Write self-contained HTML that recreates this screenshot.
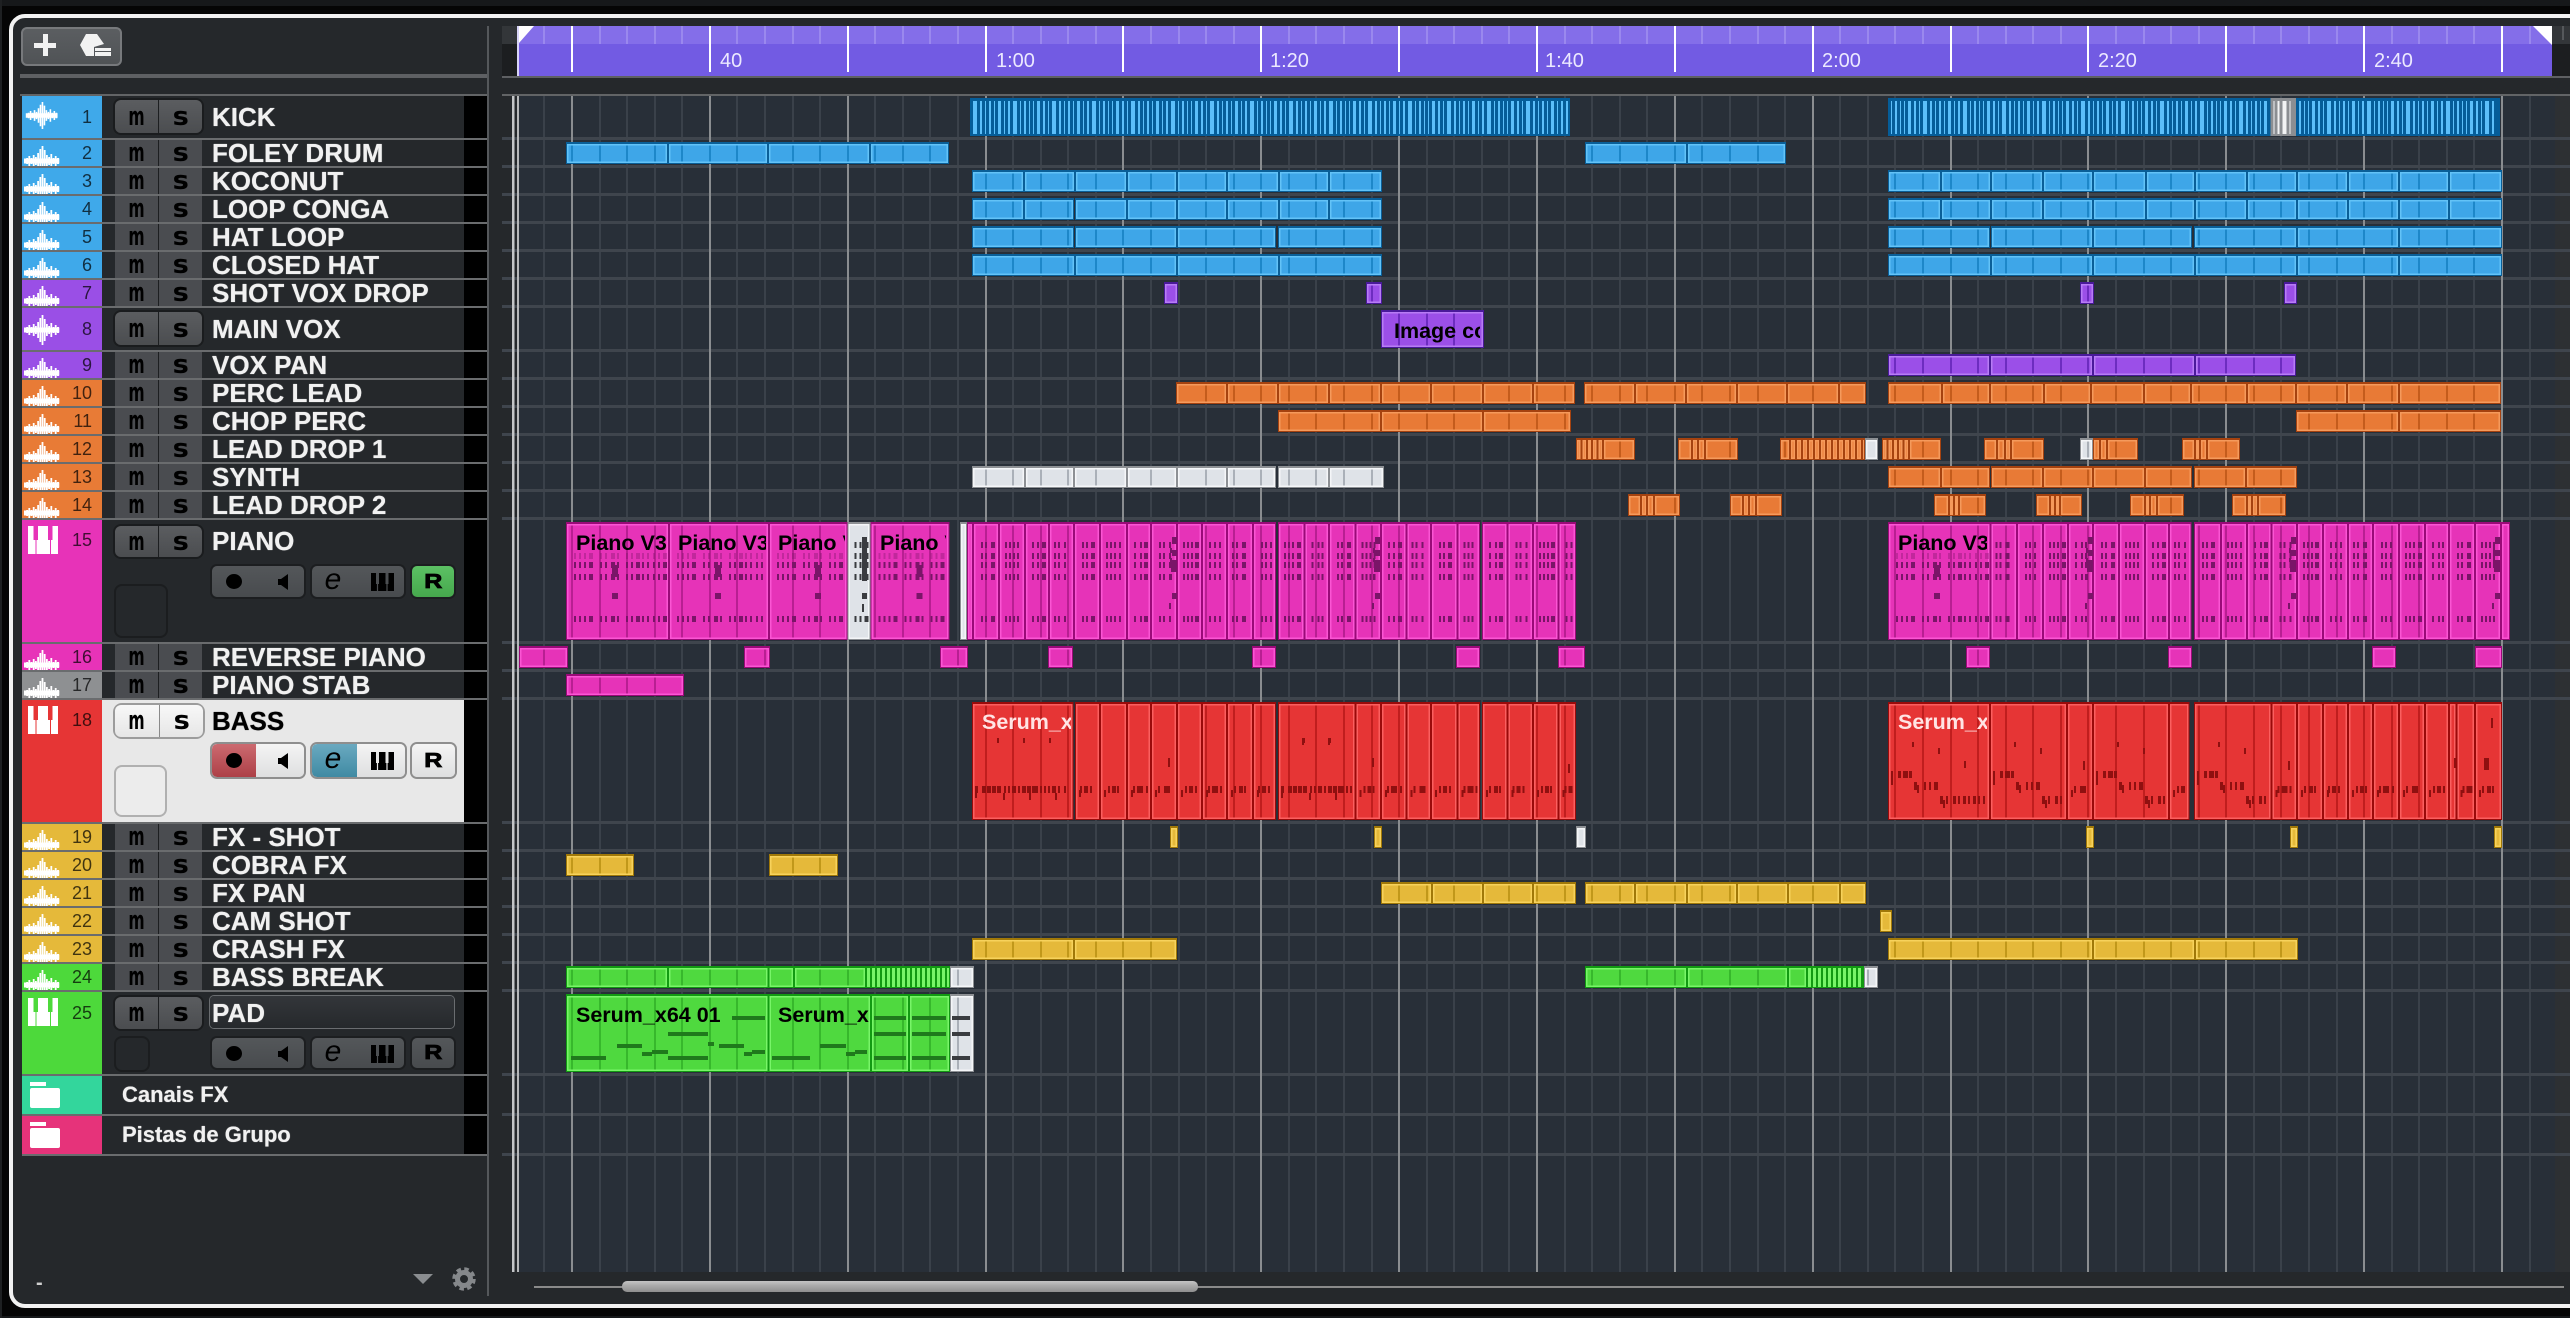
<!DOCTYPE html>
<html><head><meta charset="utf-8"><title>Arrange</title>
<style>
html,body{margin:0;padding:0;width:2570px;height:1318px;overflow:hidden;background:#050505;font-family:"Liberation Sans",sans-serif}
.a{position:absolute}
#win{position:absolute;left:9px;top:14px;width:2600px;height:1294px;box-sizing:border-box;border:4px solid #f2f2f2;border-radius:16px;background:#25282b}
#art{position:absolute;left:0;top:0}
.tl{position:absolute;height:30px;line-height:30px;font-size:20px;color:#ece9ff;top:46px}
.lb{position:absolute;height:30px;line-height:30px;font-size:21.5px;font-weight:700;color:#000;overflow:hidden;white-space:nowrap}
.r{position:absolute;left:22px;width:465px;background:#25282b;--g:#4c4f52}
.r:after{content:"";position:absolute;left:0;right:0;bottom:-2px;height:2px;background:#6a6c6e}
.st{position:absolute;left:0;top:0;width:80px;height:100%;background:var(--c);overflow:hidden}
.st svg{position:absolute;left:2px;top:6px;width:36px;height:30px;fill:#fff}
.n{position:absolute;left:0;width:70px;text-align:right;font-size:18px;color:rgba(0,0,0,.72);font-weight:400;height:24px;line-height:24px;top:calc(50% - 12px)}
.k{position:absolute;left:442px;width:23px;top:0;height:100%;background:#000}
.nm{position:absolute;left:190px;top:0;height:100%;display:flex;align-items:center;font-size:26px;font-weight:700;color:#f1f1f1;white-space:nowrap;text-shadow:0 0 .7px currentColor}
.ms{position:absolute;left:93px;width:87px;top:0;height:100%;display:flex;gap:1px;background:#1d1f21}
.ms p{margin:0;flex:1;display:flex;align-items:center;justify-content:center;background:#4a4c50}
.ms em{display:block;font:700 26px/1 "DejaVu Sans",sans-serif;color:#000;font-style:normal;transform:scaleX(.6)}
.ms p+p em{transform:scaleX(1.05)}
.ms.b{top:4px;height:33px;border-radius:6px;overflow:visible;box-shadow:0 0 0 2px #1a1c1e}
.ms.b p{background:linear-gradient(#5b5d60,#4b4d50)}
.ms.b p:first-child{border-radius:6px 0 0 6px}.ms.b p:last-child{border-radius:0 6px 6px 0}
.cg{position:absolute;height:31px;border-radius:5px;background:linear-gradient(#54575a,#484b4e);box-shadow:0 0 0 2px #1c1e20}
.dot{position:absolute;left:14px;top:8px;width:16px;height:15px;border-radius:50%;background:#000}
.spk{position:absolute;left:66px;top:8px;width:10px;height:16px;fill:#000}
.eg{position:absolute;left:11px;top:-4px;width:20px;height:36px;text-align:center;font:italic 400 30px/36px "Liberation Sans",sans-serif;color:#000}
.kb{position:absolute;left:59px;top:7px;width:23px;height:18px}
.rb{display:flex;align-items:center;justify-content:center;font:700 20px/1 "Liberation Sans",sans-serif;color:#000;-webkit-text-stroke:.8px #000}
.rb span{display:block;transform:scaleX(1.25)}
.sq{position:absolute;border-radius:6px;box-shadow:0 0 0 2px #1b1d1f;background:#25282b}
.sel .nm{color:#000}
.sel .ms{box-shadow:0 0 0 2px #9c9c9c;background:#8a8a8a;border-radius:7px}
.sel .ms p{background:linear-gradient(#f8f8f8,#e6e6e6)}
.sel .cg{height:33px;background:linear-gradient(#f4f4f4,#dedfe0);box-shadow:0 0 0 2px #8e8e8e;--g:#e8e8e8;overflow:hidden}
.sel .sq{background:#ececec;box-shadow:0 0 0 2px #b0b0b0}
.pn{position:absolute;left:0;top:0;height:100%}
.fi{position:absolute;background:#fff}
</style></head>
<body>
<div class="a" style="left:0;top:0;width:2570px;height:6px;background:#16181a"></div>
<div class="a" style="left:0;top:1316px;width:2570px;height:2px;background:#16181a"></div>
<div class="a" style="left:0;top:0;width:2px;height:1318px;background:#1e2022"></div>
<div id="win"></div>

<div class="a" style="left:21px;top:27px;width:97px;height:35px;border:2px solid #77797c;border-radius:6px;background:linear-gradient(#5b5e61,#505356)"></div>
<svg class="a" style="left:0;top:0" width="130" height="70"><path d="M43 34h5v9h8v5h-8v8h-5v-8h-9v-5h9z" fill="#f2f2f2"/><path d="M80 45l6-11h11l7 10-10 3v9h-8z" fill="#f2f2f2"/><path d="M95 48h16v3H95zM95 52h16v4H95z" fill="#f2f2f2"/></svg>
<div class="a" style="left:20px;top:74px;width:467px;height:4px;background:#5e6063"></div>
<div class="a" style="left:20px;top:94px;width:467px;height:2px;background:#626466"></div>
<div class="a" style="left:487px;top:26px;width:2px;height:1270px;background:#55585b"></div>

<svg id="art" width="2570" height="1318" shape-rendering="crispEdges"></svg>

<div class="tl" style="left:720px">40</div>
<div class="tl" style="left:996px">1:00</div>
<div class="tl" style="left:1270px">1:20</div>
<div class="tl" style="left:1545px">1:40</div>
<div class="tl" style="left:1822px">2:00</div>
<div class="tl" style="left:2098px">2:20</div>
<div class="tl" style="left:2374px">2:40</div>

<div class="lb" style="left:1394px;top:316px;width:86px">Image co</div>
<div class="lb" style="left:576px;top:528px;width:91px">Piano V3</div>
<div class="lb" style="left:678px;top:528px;width:88px">Piano V3</div>
<div class="lb" style="left:778px;top:528px;width:67px">Piano V3</div>
<div class="lb" style="left:880px;top:528px;width:66px">Piano V3</div>
<div class="lb" style="left:1898px;top:528px;width:89px">Piano V3</div>
<div class="lb" style="left:982px;top:707px;width:89px;color:#ffe4e4">Serum_x64 01</div>
<div class="lb" style="left:1898px;top:707px;width:89px;color:#ffe4e4">Serum_x64 01</div>
<div class="lb" style="left:576px;top:1000px;width:190px">Serum_x64 01</div>
<div class="lb" style="left:778px;top:1000px;width:91px">Serum_x64 01</div>

<svg width="0" height="0" style="position:absolute"><defs>
<symbol id="w" viewBox="0 0 36 30"><path d="M0 12.500h35.300v5H0zM0 13h1.800v4H0zM2.200 12h1.800v6H2.200zM4.400 10h1.800v10H4.400zM6.600 12h1.800v6H6.600zM8.800 9h1.800v12H8.800zM11 11h1.800v8H11zM13.200 7h1.800v16h-1.800zM15.400 3h1.800v24h-1.800zM17.600 0h1.800v30h-1.800zM19.800 4h1.800v22h-1.800zM22 9h1.800v12H22zM24.200 11h1.800v8h-1.800zM26.400 8h1.800v14h-1.800zM28.600 12h1.800v6h-1.800zM30.800 10h1.800v10h-1.800zM33 12h2v6h-2z"/></symbol>
<symbol id="sp" viewBox="0 0 10 16"><path d="M0 5h3l7-5v16l-7-5H0z"/></symbol>
<symbol id="kb" viewBox="0 0 23 18"><path d="M0 0h23v18H0z" fill="#000"/><path d="M5 0h3v11H7.100v7H5.900v-7H5zM14.500 0h3v11h-.9v7h-1.200v-7h-.9z" style="fill:var(--g)"/></symbol>
</defs></svg>

<div class="r" style="top:96px;height:42px;--c:#3fa9ea"><div class="st"><svg style="height:27px"><use href="#w"/></svg></div><b class="n">1</b><div class="ms b"><p><em>m</em></p><p><em>s</em></p></div><div class="nm">KICK</div><div class="k"></div></div>
<div class="r" style="top:140px;height:26px;--c:#3fa9ea"><div class="st"><svg><use href="#w"/></svg></div><b class="n">2</b><div class="ms"><p><em>m</em></p><p><em>s</em></p></div><div class="nm">FOLEY DRUM</div><div class="k"></div></div>
<div class="r" style="top:168px;height:26px;--c:#3fa9ea"><div class="st"><svg><use href="#w"/></svg></div><b class="n">3</b><div class="ms"><p><em>m</em></p><p><em>s</em></p></div><div class="nm">KOCONUT</div><div class="k"></div></div>
<div class="r" style="top:196px;height:26px;--c:#3fa9ea"><div class="st"><svg><use href="#w"/></svg></div><b class="n">4</b><div class="ms"><p><em>m</em></p><p><em>s</em></p></div><div class="nm">LOOP CONGA</div><div class="k"></div></div>
<div class="r" style="top:224px;height:26px;--c:#3fa9ea"><div class="st"><svg><use href="#w"/></svg></div><b class="n">5</b><div class="ms"><p><em>m</em></p><p><em>s</em></p></div><div class="nm">HAT LOOP</div><div class="k"></div></div>
<div class="r" style="top:252px;height:26px;--c:#3fa9ea"><div class="st"><svg><use href="#w"/></svg></div><b class="n">6</b><div class="ms"><p><em>m</em></p><p><em>s</em></p></div><div class="nm">CLOSED HAT</div><div class="k"></div></div>
<div class="r" style="top:280px;height:26px;--c:#9a4fe6"><div class="st"><svg><use href="#w"/></svg></div><b class="n">7</b><div class="ms"><p><em>m</em></p><p><em>s</em></p></div><div class="nm">SHOT VOX DROP</div><div class="k"></div></div>
<div class="r" style="top:308px;height:42px;--c:#9a4fe6"><div class="st"><svg style="top:7px"><use href="#w"/></svg></div><b class="n">8</b><div class="ms b"><p><em>m</em></p><p><em>s</em></p></div><div class="nm">MAIN VOX</div><div class="k"></div></div>
<div class="r" style="top:352px;height:26px;--c:#9a4fe6"><div class="st"><svg><use href="#w"/></svg></div><b class="n">9</b><div class="ms"><p><em>m</em></p><p><em>s</em></p></div><div class="nm">VOX PAN</div><div class="k"></div></div>
<div class="r" style="top:380px;height:26px;--c:#e87b36"><div class="st"><svg><use href="#w"/></svg></div><b class="n">10</b><div class="ms"><p><em>m</em></p><p><em>s</em></p></div><div class="nm">PERC LEAD</div><div class="k"></div></div>
<div class="r" style="top:408px;height:26px;--c:#e87b36"><div class="st"><svg><use href="#w"/></svg></div><b class="n">11</b><div class="ms"><p><em>m</em></p><p><em>s</em></p></div><div class="nm">CHOP PERC</div><div class="k"></div></div>
<div class="r" style="top:436px;height:26px;--c:#e87b36"><div class="st"><svg><use href="#w"/></svg></div><b class="n">12</b><div class="ms"><p><em>m</em></p><p><em>s</em></p></div><div class="nm">LEAD DROP 1</div><div class="k"></div></div>
<div class="r" style="top:464px;height:26px;--c:#e87b36"><div class="st"><svg><use href="#w"/></svg></div><b class="n">13</b><div class="ms"><p><em>m</em></p><p><em>s</em></p></div><div class="nm">SYNTH</div><div class="k"></div></div>
<div class="r" style="top:492px;height:26px;--c:#e87b36"><div class="st"><svg><use href="#w"/></svg></div><b class="n">14</b><div class="ms"><p><em>m</em></p><p><em>s</em></p></div><div class="nm">LEAD DROP 2</div><div class="k"></div></div>

<div class="r" style="top:520px;height:122px;--c:#e733b8"><div class="st"><svg class="pn" style="left:0;top:0;width:80px;height:122px"><path d="M6 6h30v28H6z" fill="#fff"/><path d="M11.500 6h4.500v14h-4.500zM26 6h4.500v14H26z" style="fill:var(--c)"/><path d="M13.500 20h1v14h-1zM28 20h1v14h-1z" style="fill:var(--c)"/></svg></div><b class="n" style="top:8px;">15</b><div class="ms b" style="top:6px;height:31px"><p><em>m</em></p><p><em>s</em></p></div><div class="nm" style="height:42px">PIANO</div>
<div class="cg" style="left:190px;top:46px;width:92px"><i class="dot"></i><svg class="spk"><use href="#sp"/></svg></div>
<div class="cg" style="left:290px;top:46px;width:92px"><i class="eg">e</i><svg class="kb"><use href="#kb"/></svg></div>
<div class="cg rb" style="left:390px;top:46px;width:42px;background:linear-gradient(#5cc164,#46a84d)"><span>R</span></div>
<div class="sq" style="left:94px;top:66px;width:50px;height:50px"></div><div class="k"></div></div>

<div class="r" style="top:644px;height:26px;--c:#e733b8"><div class="st"><svg><use href="#w"/></svg></div><b class="n">16</b><div class="ms"><p><em>m</em></p><p><em>s</em></p></div><div class="nm">REVERSE PIANO</div><div class="k"></div></div>
<div class="r" style="top:672px;height:26px;--c:#8e9092"><div class="st"><svg><use href="#w"/></svg></div><b class="n">17</b><div class="ms"><p><em>m</em></p><p><em>s</em></p></div><div class="nm">PIANO STAB</div><div class="k"></div></div>

<div class="r sel" style="top:700px;height:122px;--c:#e63535;background:#e8e8e8"><div class="st"><svg class="pn" style="left:0;top:0;width:80px;height:122px"><path d="M6 6h30v28H6z" fill="#fff"/><path d="M11.500 6h4.500v14h-4.500zM26 6h4.500v14H26z" style="fill:var(--c)"/><path d="M13.500 20h1v14h-1zM28 20h1v14h-1z" style="fill:var(--c)"/></svg></div><b class="n" style="top:8px;">18</b><div class="ms" style="top:5px;height:32px;left:93px;width:88px"><p style="border-radius:6px 0 0 6px"><em>m</em></p><p style="border-radius:0 6px 6px 0"><em>s</em></p></div><div class="nm" style="height:42px">BASS</div>
<div class="cg" style="left:190px;top:44px;width:92px"><div class="pn" style="width:44px;background:linear-gradient(#cc6a70,#ad4047)"></div><i class="dot" style="top:9px"></i><svg class="spk" style="top:9px"><use href="#sp"/></svg></div>
<div class="cg" style="left:290px;top:44px;width:93px"><div class="pn" style="width:45px;background:linear-gradient(#6aa9c0,#3f8aa3)"></div><i class="eg" style="top:-3px">e</i><svg class="kb" style="top:8px"><use href="#kb"/></svg></div>
<div class="cg rb" style="left:390px;top:44px;width:43px"><span>R</span></div>
<div class="sq" style="left:94px;top:67px;width:49px;height:48px"></div><div class="k"></div></div>

<div class="r" style="top:824px;height:26px;--c:#e5b93a"><div class="st"><svg><use href="#w"/></svg></div><b class="n">19</b><div class="ms"><p><em>m</em></p><p><em>s</em></p></div><div class="nm">FX - SHOT</div><div class="k"></div></div>
<div class="r" style="top:852px;height:26px;--c:#e5b93a"><div class="st"><svg><use href="#w"/></svg></div><b class="n">20</b><div class="ms"><p><em>m</em></p><p><em>s</em></p></div><div class="nm">COBRA FX</div><div class="k"></div></div>
<div class="r" style="top:880px;height:26px;--c:#e5b93a"><div class="st"><svg><use href="#w"/></svg></div><b class="n">21</b><div class="ms"><p><em>m</em></p><p><em>s</em></p></div><div class="nm">FX PAN</div><div class="k"></div></div>
<div class="r" style="top:908px;height:26px;--c:#e5b93a"><div class="st"><svg><use href="#w"/></svg></div><b class="n">22</b><div class="ms"><p><em>m</em></p><p><em>s</em></p></div><div class="nm">CAM SHOT</div><div class="k"></div></div>
<div class="r" style="top:936px;height:26px;--c:#e5b93a"><div class="st"><svg><use href="#w"/></svg></div><b class="n">23</b><div class="ms"><p><em>m</em></p><p><em>s</em></p></div><div class="nm">CRASH FX</div><div class="k"></div></div>
<div class="r" style="top:964px;height:26px;--c:#4dd93b"><div class="st"><svg><use href="#w"/></svg></div><b class="n">24</b><div class="ms"><p><em>m</em></p><p><em>s</em></p></div><div class="nm">BASS BREAK</div><div class="k"></div></div>

<div class="r" style="top:992px;height:82px;--c:#4dd93b"><div class="st"><svg class="pn" style="left:0;top:0;width:80px;height:82px"><path d="M6 6h30v28H6z" fill="#fff"/><path d="M11.500 6h4.500v14h-4.500zM26 6h4.500v14H26z" style="fill:var(--c)"/><path d="M13.500 20h1v14h-1zM28 20h1v14h-1z" style="fill:var(--c)"/></svg></div><b class="n" style="top:9px;">25</b><div class="ms b" style="top:5px;height:32px"><p><em>m</em></p><p><em>s</em></p></div><div class="a" style="left:188px;top:4px;width:244px;height:32px;border-radius:4px;background:linear-gradient(#33363a,#26292c);box-shadow:0 0 0 1px #6a6d70"></div><div class="nm" style="height:42px;">PAD</div>
<div class="cg" style="left:190px;top:46px;width:92px;height:30px"><i class="dot"></i><svg class="spk"><use href="#sp"/></svg></div>
<div class="cg" style="left:290px;top:46px;width:92px;height:30px"><i class="eg">e</i><svg class="kb"><use href="#kb"/></svg></div>
<div class="cg rb" style="left:390px;top:46px;width:42px;height:30px"><span>R</span></div>
<div class="sq" style="left:94px;top:46px;width:32px;height:32px"></div><div class="k"></div></div>

<div class="r" style="top:1076px;height:38px;--c:#33d69c"><div class="st"><i class="fi" style="left:8px;top:6px;width:16px;height:4px"></i><i class="fi" style="left:8px;top:12px;width:30px;height:20px;border-radius:2px"></i></div><div class="nm" style="left:100px;font-size:22px">Canais FX</div><div class="k"></div></div>
<div class="r" style="top:1116px;height:38px;--c:#e6337a"><div class="st"><i class="fi" style="left:8px;top:6px;width:16px;height:4px"></i><i class="fi" style="left:8px;top:12px;width:30px;height:20px;border-radius:2px"></i></div><div class="nm" style="left:100px;font-size:22px">Pistas de Grupo</div><div class="k"></div></div>

<div class="a" style="left:36px;top:1268px;height:30px;line-height:30px;font-size:20px;font-weight:700;color:#cfcfcf">-</div>
<svg class="a" style="left:410px;top:1264px" width="70" height="30"><path d="M3 10h20l-10 10z" fill="#8a8d90"/><circle cx="54" cy="15" r="6.500" fill="none" stroke="#85888b" stroke-width="5"/><circle cx="54" cy="15" r="10" fill="none" stroke="#85888b" stroke-width="3.500" stroke-dasharray="4.500 3.350"/></svg>

<div class="a" style="left:534px;top:1286px;width:2030px;height:2px;background:#8a8a8a"></div>
<div class="a" style="left:622px;top:1281px;width:576px;height:11px;border-radius:5px;background:linear-gradient(#c4c4c4,#a8a8a8 45%,#8f8f8f)"></div>

<script>
(function(){
var R={1:[96,138],2:[140,166],3:[168,194],4:[196,222],5:[224,250],6:[252,278],7:[280,306],8:[308,350],9:[352,378],10:[380,406],11:[408,434],12:[436,462],13:[464,490],14:[492,518],15:[520,642],16:[644,670],17:[672,698],18:[700,822],19:[824,850],20:[852,878],21:[880,906],22:[908,934],23:[936,962],24:[964,990],25:[992,1074]};
var C={
b:{d:'#0a5f98',l:'#63c3f7',f:'#3ea6e8',g:'#1d87c9'},
p:{d:'#4a1a9a',l:'#b77cf5',f:'#9b4fe8',g:'#6d2cc0'},
o:{d:'#a5420f',l:'#f59a5c',f:'#e87a36',g:'#c45c1c'},
m:{d:'#9a0a78',l:'#fb55d4',f:'#e633b8',g:'#b81f92'},
w:{d:'#8d9094',l:'#f4f6f8',f:'#dfe3e8',g:'#aab0b8'},
r:{d:'#9a0a0a',l:'#fb5f5f',f:'#e63535',g:'#c01e1e'},
y:{d:'#a07808',l:'#f7d25c',f:'#e5b93a',g:'#c1981a'},
g:{d:'#129a12',l:'#78f568',f:'#4fd93f',g:'#37b82c'}};
var s='';
function rc(x,y,w,h,c,o){if(w<=0||h<=0)return;s+='<rect x="'+x+'" y="'+y+'" width="'+w+'" height="'+h+'" fill="'+c+'"'+(o?' opacity="'+o+'"':'')+'/>';}
var minor=[],major=[];
for(var k=-1;;k++){var x=Math.round(572+27.572*k);if(x>2555)break;if(((k%5)+5)%5==0)major.push(x);else minor.push(x);}
var all=minor.concat(major);

/* arrange background */
rc(519,96,2036,1176,'#282f38');
rc(2555,96,15,1176,'#2d3033');
minor.forEach(function(x){rc(x-1,96,2,1176,'#3a414a');});
var seps=[138,166,194,222,250,278,306,350,378,406,434,462,490,518,642,670,698,822,850,878,906,934,962,990,1074,1114,1154];
seps.forEach(function(y){rc(502,y-1,2068,3,'#3f454d');});
major.forEach(function(x){rc(x-1,96,2,1176,'#8a8d90');});
rc(512,96,2.500,1176,'#c4c6c8');rc(517,96,2,1176,'#b6b8ba');
/* ruler */
rc(502,26,17,18,'#333639');rc(502,44,17,32,'#1c1e20');
rc(2552,26,18,18,'#333639');rc(2552,44,18,32,'#1c1e20');
rc(519,26,2033,18,'#846ee9');rc(519,44,2033,32,'#725be3');
minor.forEach(function(x){if(x>520&&x<2552)rc(x-1,26,2,18,'#9a88ee');});
major.forEach(function(x){rc(x-1,26,2,46,'#ffffff');});
rc(517,26,2,50,'#d8d4f8');
s+='<polygon points="519,26 534,26 519,43" fill="#fff" shape-rendering="auto"/><polygon points="2533,26 2552,26 2552,45" fill="#fff" shape-rendering="auto"/>';
rc(502,76,2068,2,'#5e6063');rc(502,94,2068,2,'#626466');
rc(2562,26,2,14,'#55585b');

function seg(t,x0,x1,col){
 var c=C[col],y0=R[t][0]+2,y1=R[t][1]-2,w=x1-x0,h=y1-y0;
 rc(x0,y0,w,h,c.d);
 rc(x0+1,y0+2,w-2,h-3,c.l);
 rc(x0+2.5,y0+3.5,w-5,h-6,c.f);
 all.forEach(function(g){if(g>x0+3&&g<x1-4)rc(g-1,y0+3.5,2,h-6,c.g);});
}
function ch(t,xs,col){for(var i=0;i<xs.length-1;i++)seg(t,xs[i],xs[i+1],col);}
function hatch(t,a,b,st,col){var x=a;while(x<b-1){var e=Math.min(x+st,b);seg(t,x,e,col);x=e;}}

/* kick */
var kw=[4,2,1,2,1,3,1,2,4,1,2,1,1,3,2,1];var ki=0;
function stripes(x0,x1,dk,lt,t){
 var y0=R[t][0]+2,y1=R[t][1]-2;rc(x0,y0,x1-x0,y1-y0,dk);
 var x=x0+3;while(x<x1-3){var w=kw[ki++%kw.length];if(x+w>x1-2)w=x1-2-x;rc(x,y0+3,w,y1-y0-5,lt);x+=w+3;}
}
stripes(970,1570,'#055d99','#5cbffa',1);
stripes(1888,2270.5,'#055d99','#5cbffa',1);
stripes(2270.5,2296,'#8b8e92','#f2f3f4',1);
stripes(2296,2500,'#055d99','#5cbffa',1);

ch(2,[566,668,768,870,949],'b');ch(2,[1585,1687,1786],'b');
var a=[972,1024,1075,1127,1177,1227,1279,1329,1382],b=[1888,1941,1991,2043,2093,2146,2195,2247,2297,2348,2399,2449,2502];
ch(3,a,'b');ch(3,b,'b');
ch(4,[972,1024,1074],'b');ch(4,[1075,1127,1177,1227,1279,1329,1382],'b');ch(4,b,'b');
ch(5,[972,1074],'b');ch(5,[1075,1177,1276],'b');ch(5,[1278,1382],'b');ch(5,[1888,1990],'b');ch(5,[1991,2093,2192],'b');ch(5,[2194,2297,2399,2502],'b');
ch(6,[972,1075,1177,1279,1382],'b');ch(6,[1888,1991,2093,2195,2297,2399,2502],'b');
ch(7,[1164,1178],'p');ch(7,[1366,1382],'p');ch(7,[2080,2094],'p');ch(7,[2284,2297],'p');
ch(8,[1381,1484],'p');
ch(9,[1888,1990,2093,2195,2296],'p');
ch(10,[1176,1227,1278,1329,1381,1431,1483,1533,1575],'o');ch(10,[1584,1635,1686,1737,1787,1839,1866],'o');
ch(10,[1888,1942,1990,2044,2091,2144,2191,2247,2296,2347,2399,2501],'o');
ch(11,[1278,1381,1483,1571],'o');ch(11,[2296,2399,2501],'o');

hatch(12,1576,1603,5.400,'o');seg(12,1603,1635,'o');
ch(12,[1678,1692,1698,1705,1738],'o');
seg(12,1780,1790,'o');hatch(12,1790,1865,6,'o');seg(12,1865,1878,'w');
hatch(12,1882,1909,5.400,'o');seg(12,1909,1941,'o');
ch(12,[1984,1997,2005,2011,2044],'o');
seg(12,2080,2093,'w');ch(12,[2093,2100,2107,2138],'o');
ch(12,[2182,2195,2200,2207,2240],'o');

ch(13,[972,1025,1074,1127,1177,1227,1276],'w');ch(13,[1278,1329,1384],'w');
ch(13,[1888,1941,1990],'o');ch(13,[1991,2043,2093,2145,2192],'o');ch(13,[2194,2246,2297],'o');

ch(14,[1628,1641,1647,1654,1680],'o');ch(14,[1730,1743,1749,1756,1782],'o');
ch(14,[1934,1949,1954,1959,1986],'o');ch(14,[2036,2050,2055,2060,2082],'o');
ch(14,[2130,2145,2150,2157,2184],'o');ch(14,[2232,2247,2252,2258,2286],'o');

/* piano */
var P=[[566,669,769,847.5],[870.5,949.3],[1888,1990.5]];
var N=[[973,999,1025,1049,1074,1100,1127,1151,1177,1202,1227,1253,1276],[1278,1304.5,1329,1355.5,1381,1406.5,1431,1457.5,1480],[1482,1507.5,1533,1558.6,1576],[1990.5,2017,2043,2068,2093,2119,2145,2169,2191.5],[2194,2221,2247,2271.5,2297,2323,2348,2373,2399,2425,2449,2475,2501]];
P.forEach(function(p){ch(15,p,'m');});
seg(15,847.5,870.5,'w');seg(15,960,967,'w');seg(15,967,973,'m');seg(15,2501,2510,'m');
N.forEach(function(p){ch(15,p,'m');});
var tk='#7a1568';
var wp=[[8],[13],[18],[23,1],[34],[39],[45,1],[51],[60],[65],[70,1],[76],[81],[87],[92],[97,1]];
function wide(x0,x1){
 [553,562,574,616].forEach(function(y){wp.forEach(function(o){if(x0+o[0]<x1-4)rc(x0+o[0],y,o[1]?4:2,6,tk,y==553?'.35':0);});});
 rc(x0+46,565,6,12,tk);rc(x0+46,593,6,6,tk);
}
[[566,669],[669,769],[769,847.5],[870.5,949.3],[1888,1990.5]].forEach(function(p){wide(p[0],p[1]);});
var pats=[[8,12,18],[6,10,14,18],[7,12,17],[5,9,15],[8,12,17],[6,10,14,19],[7,13,17]];
var pi=0;
function narrow(x0,x1,col){var p=pats[pi++%pats.length];[542,553,562,574,616].forEach(function(y){p.forEach(function(o,i){if(x0+o<x1-4)rc(x0+o,y,i==p.length-1&&pi%2?4:2,6,col||tk);});});}
N.forEach(function(a){for(var i=0;i<a.length-1;i++)narrow(a[i],a[i+1]);});
narrow(847.5,870.5,'#3a3c40');rc(862,537,5,44,'#3a3c40');rc(862,593,5,6,'#3a3c40');rc(862,604,2,8,'#3a3c40');
function casc(x){rc(x,537,5,7,tk);rc(x-2,548,2,5,tk);rc(x,550,5,6,tk);rc(x-2,558,2,4,tk);rc(x-1,560,6,12,tk);rc(x-2,574,2,6,tk);rc(x,593,5,6,tk);rc(x-3,603,2,6,tk);}
[1172,1375,2088,2291,2495].forEach(casc);

/* reverse / stab */
[[519,568],[744,770],[940,968],[1048,1073],[1252,1276],[1456,1480],[1558,1585],[1966,1990],[2168,2192],[2372,2396],[2475,2502]].forEach(function(p){seg(16,p[0],p[1],'m');});
seg(17,566,684,'m');

/* red */
var RA=[[972,1073.5],[1075,1100,1127,1151,1177,1202,1227,1253,1276],[1278,1355.5,1381,1406.5,1431,1457.5,1480],[1482,1507.5,1533,1558.6,1576]];
var RB=[[1888,1990,2067,2093,2169,2189.5],[2194,2271.5,2297,2323,2348,2373,2399,2425,2449,2456.6,2475,2502]];
RA.concat(RB).forEach(function(p){ch(18,p,'r');});
var rt='#8f1010';
function rn(x0,x1){var p=pats[pi++%pats.length];p.forEach(function(o,i){if(x0+o<x1-4)rc(x0+o,786,i==1?4:2,7,rt);});rc(x0+4,790,2,7,rt);}
RA.forEach(function(a,ai){for(var i=0;i<a.length-1;i++){var w=a[i+1]-a[i];
 if(w>60){var q=[4,10,15,20,25,32,36,40,46,50,55,60,64,68,72,76,80,86,92];q.forEach(function(o){if(a[i]+o<a[i+1]-4)rc(a[i]+o,786,o%5==0?4:2,7,rt);});rc(a[i]+3,786,2,12,rt);[31,57,83].forEach(function(o){if(a[i]+o<a[i+1]-4){rc(a[i]+o,793,2,7,rt);rc(a[i]+o-6,738,2,5,rt);}});}
 else rn(a[i],a[i+1]);}});
function rw(x0,x1){
 [[10,771,3],[15,771,5],[21,771,3],[3,771,2]].forEach(function(o){if(x0+o[0]<x1-4)rc(x0+o[0],o[1],o[2],7,rt);});
 rc(x0+3,771,2,14,rt);
 [[26,782,3],[29,785,2],[36,782,2],[41,782,2],[46,782,4]].forEach(function(o){if(x0+o[0]<x1-4)rc(x0+o[0],o[1],o[2],8,rt);});
 [[52,796,3],[55,800,2],[58,796,2],[65,796,3],[70,796,2],[75,796,3],[80,796,2],[85,796,3],[90,796,2],[95,796,2]].forEach(function(o){if(x0+o[0]<x1-4)rc(x0+o[0],o[1],o[2],8,rt);});
 [[24,742,2,5],[50,748,2,6],[76,761,2,7]].forEach(function(o){if(x0+o[0]<x1-4)rc(x0+o[0],o[1],o[2],o[3],rt);});
}
rw(1888,1990);rw(1990,2067);rw(2093,2169);rw(2194,2271.5);
[[2067,2093],[2169,2189.5],[2271.5,2297],[2297,2323],[2323,2348],[2348,2373],[2373,2399],[2399,2425],[2425,2449],[2456.6,2475],[2475,2502]].forEach(function(p){rn(p[0],p[1]);});
[[1168,758],[1372,758],[1568,764],[2083,761],[2288,761]].forEach(function(p){rc(p[0],p[1],2,9,rt);});
rc(1302,738,2,7,rt);rc(1328,738,2,7,rt);
rc(2484,758,5,12,rt);rc(2491,718,2,10,rt);rc(2454,758,2,10,rt);

/* yellow */
[[1170,1178],[1374,1382],[2086,2094],[2290,2298],[2494,2502]].forEach(function(p){seg(19,p[0],p[1],'y');});
seg(19,1576,1586,'w');
seg(20,566,634,'y');seg(20,769,838,'y');
ch(21,[1381,1432,1483,1533,1576],'y');ch(21,[1585,1635,1687,1737,1788,1840,1866],'y');
seg(22,1880,1892,'y');
ch(23,[972,1074,1177],'y');ch(23,[1888,2093,2195,2298],'y');

/* green */
ch(24,[566,668,768.5,794,866],'g');hatch(24,866,950,5,'g');seg(24,950,974,'w');
ch(24,[1585,1687,1788,1807],'g');hatch(24,1807,1864,5,'g');seg(24,1864,1878,'w');
ch(25,[566,768.5,871,909,950],'g');seg(25,950,974,'w');
var gt='#1f7a1c';
[[571,606,1056],[668,708,1056],[772,810,1056],[874,906,1056],[912,946,1056],[617,642,1044],[820,846,1044],[642,652,1052],[652,668,1050],[744,752,1052],[752,765,1050],[846,855,1052],[855,867,1050],[668,708,1032],[708,714,1042],[719,744,1044],[732,765,1016],[874,906,1016],[912,946,1016],[874,906,1032],[912,946,1032]].forEach(function(n){rc(n[0],n[2],n[1]-n[0],4,gt);});
[1016,1032,1056].forEach(function(y){rc(952,y,18,4,'#3a3c40');});

document.getElementById('art').innerHTML=s;
})();
</script>
</body></html>
